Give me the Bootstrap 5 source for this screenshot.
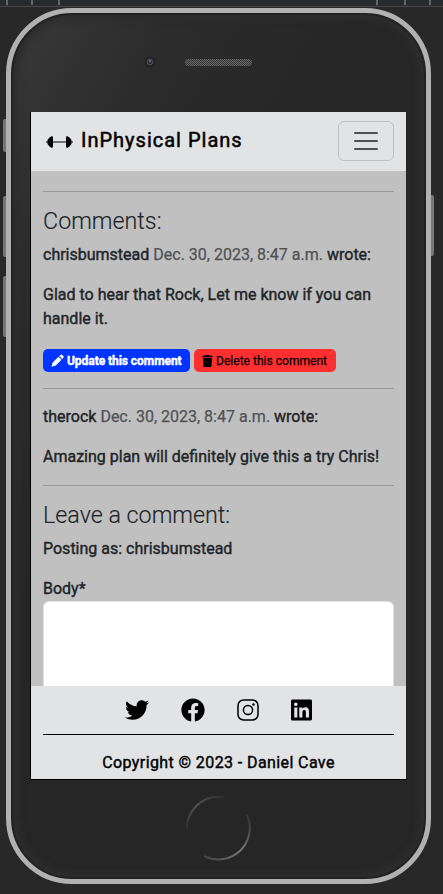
<!DOCTYPE html>
<html lang="en">
<head>
<meta charset="utf-8">
<meta name="viewport" content="width=device-width, initial-scale=1">
<title>InPhysical Plans</title>
<link href="https://cdn.jsdelivr.net/npm/bootstrap@5.3.0/dist/css/bootstrap.min.css" rel="stylesheet">
<style>
body{background:#282828;font-family:Roboto,"Liberation Sans",sans-serif;font-weight:400;height:894px;overflow:hidden}
.ruler{height:7px;background:#282a2d;border-bottom:1px solid #4b4747}
.ruler svg{display:block}
.phone{width:425px;height:876px;margin:1px 0 0 6px;border:5px solid #b1b1b1;border-radius:66px;padding:99px 19px 0 19px;
 background:linear-gradient(120deg,#393939 0,#2c2c2c 18%,#262626 38%,#262626 100%);box-shadow:inset 0 0 0 2px #222,inset 0 0 7px 7px #2d2d2d}
.side-key{width:3px;background:#777;border-radius:2px 0 0 2px;left:3px}
.side-key.right{left:431px;border-radius:0 2px 2px 0}
.camera{left:141px;top:54px}
.speaker{left:185px;top:59px;width:67px;height:7px;border-radius:4px;background:repeating-conic-gradient(#666 0 25%,#363636 0 50%) 0 0/2px 2px}
.home-key{left:185px;top:794px}
.device-screen{width:377px;height:668px;border:solid #000;border-width:0 0 1px 1px;border-right:1px solid transparent;background:#c0c0c0;background-clip:padding-box;color:#212529;-webkit-text-stroke:.4px currentColor}
.top-bar{height:59px;background:#e1e3e5;padding:0 12px 0 15px}
.brand-name{font-size:20px;letter-spacing:1px;color:#000;line-height:30px;margin-top:-4px;margin-left:-1px;-webkit-text-stroke-width:.5px}
.navbar-toggler{width:56px;height:40px;border-color:rgba(0,0,0,.15);margin-top:-2px}
.content-area{height:515px;padding:4px 12px 0}
.section-title{font-size:23.3px;font-weight:300;line-height:27px;height:27px;-webkit-text-stroke-width:.15px}
.stamp{color:#505254;-webkit-text-stroke-width:.25px}
.action-btn{height:23px;font-size:12px;line-height:18px;padding:0 8px;border:0;border-radius:5px;display:flex;align-items:center;gap:3px;white-space:nowrap}
.edit-btn,.edit-btn:hover{background:#0034ff;color:#fff;font-weight:700;letter-spacing:-.05px;width:147px}
.trash-btn,.trash-btn:hover{background:#ff2f2f;color:#000;width:142px;letter-spacing:.03px;-webkit-text-stroke-width:.25px}
.btn-row{padding-top:2px}
.content-area textarea{height:240px;border-color:#dee2e6;border-radius:6px;resize:none;background:#fff}
.page-foot{height:93px;background:#e1e3e5;color:#000}
.page-foot p{letter-spacing:.4px}
.social-row{height:48px;gap:32px}
.foot-rule{border-top:1px solid #000;margin:0 12px}
</style>
<script src="https://cdn.jsdelivr.net/npm/bootstrap@5.3.0/dist/js/bootstrap.bundle.min.js"></script>
</head>
<body class="position-relative">
<div class="ruler"><svg width="443" height="5" fill="#626466"><path d="M6 0h2v5H6zM31 0h2v5h-2zM58 0h2v5h-2zM376 0h2v5h-2zM404 0h2v5h-2zM429 0h2v5h-2z"/></svg></div>
<div class="side-key position-absolute" style="top:119px;height:33px"></div>
<div class="side-key position-absolute" style="top:196px;height:61px"></div>
<div class="side-key position-absolute" style="top:276px;height:61px"></div>
<div class="side-key right position-absolute" style="top:195px;height:61px"></div>
<main class="phone">
 <div class="device-screen d-flex flex-column overflow-hidden">
  <nav class="navbar navbar-light top-bar flex-nowrap flex-shrink-0">
   <a class="d-flex align-items-center text-decoration-none" href="#">
    <svg width="28" height="14" viewBox="0 0 28 14" class="me-2"><path d="M0 6.500h27v1H0zM1.500 5l2-2.500L6 1l1 1v10l-1 1-2.500-1.500L1.500 9zM20 2l1-1 2.500 1.500 2 2.500v4l-2 2.500L21 13l-1-1z"/></svg>
    <span class="brand-name">InPhysical Plans</span>
   </a>
   <button class="navbar-toggler" type="button" aria-label="Toggle navigation"><svg class="d-block mx-auto" width="30" height="30" viewBox="0 0 30 30"><path stroke="#4f5052" stroke-linecap="round" stroke-width="2" d="M4 7h22M4 15h22M4 23h22"/></svg></button>
  </nav>
  <section class="content-area overflow-hidden flex-shrink-0">
   <hr>
   <h4 class="section-title mb-2">Comments:</h4>
   <p class="mb-3">chrisbumstead <span class="stamp">Dec. 30, 2023, 8:47 a.m.</span> wrote:</p>
   <p class="mb-3">Glad to hear that Rock, Let me know if you can handle it.</p>
   <div class="d-flex gap-1 btn-row">
    <a href="#" class="btn action-btn edit-btn"><svg width="13" height="13" viewBox="0 0 13 13" fill="currentColor"><path d="M9.200 1.200Q10.300 0 11.500 1.200l.6.600q1.100 1.100 0 2.300l-.9.900-3-3zM7.500 2.700l3 3-5.700 5.800L.5 12.700l1.200-4.200z"/></svg>Update this comment</a>
    <a href="#" class="btn action-btn trash-btn"><svg width="11" height="12" viewBox="0 0 448 512" fill="currentColor"><path d="M135 18C140 7 152 0 164 0h120c12 0 24 7 29 18l7 14h96c18 0 32 14 32 32s-14 32-32 32H32C14 96 0 82 0 64s14-32 32-32h96zM32 128h384l-21 339c-2 25-23 45-48 45H101c-25 0-46-20-48-45z"/></svg>Delete this comment</a>
   </div>
   <hr>
   <p class="mb-3">therock <span class="stamp">Dec. 30, 2023, 8:47 a.m.</span> wrote:</p>
   <p class="mb-3">Amazing plan will definitely give this a try Chris!</p>
   <hr>
   <h4 class="section-title mb-2">Leave a comment:</h4>
   <p class="mb-3">Posting as: chrisbumstead</p>
   <label for="body-text" class="d-block">Body*</label>
   <textarea id="body-text" class="form-control"></textarea>
  </section>
  <footer class="page-foot flex-shrink-0 text-center">
   <div class="social-row d-flex align-items-center justify-content-center">
    <svg width="24" height="24" viewBox="0 0 512 512"><path d="M459.400 151.700c.3 4.500.3 9.100.3 13.600 0 138.700-105.600 298.600-298.600 298.600-59.500 0-114.700-17.200-161.100-47.100 8.400 1 16.600 1.300 25.300 1.300 49.100 0 94.200-16.600 130.300-44.800-46.100-1-84.800-31.200-98.100-72.800 6.500 1 13 1.600 19.800 1.600 9.400 0 18.800-1.300 27.600-3.600-48.100-9.700-84.100-52-84.100-103v-1.300c14 7.800 30.200 12.700 47.400 13.300-28.300-18.800-46.800-51-46.800-87.400 0-19.500 5.200-37.400 14.300-53 51.700 63.700 129.300 105.300 216.400 109.800-1.600-7.800-2.600-15.900-2.600-24 0-57.800 46.800-104.900 104.900-104.900 30.200 0 57.500 12.700 76.700 33.100 23.700-4.500 46.500-13.300 66.600-25.300-7.800 24.400-24.400 44.800-46.100 57.800 21.100-2.300 41.600-8.100 60.400-16.200-14.300 20.800-32.200 39.300-52.600 54.300z"/></svg>
    <svg width="24" height="24" viewBox="0 0 512 512"><path d="M504 256C504 119 393 8 256 8S8 119 8 256c0 123.800 90.700 226.400 209.300 245V327.700h-63V256h63v-54.600c0-62.200 37-96.500 93.700-96.500 27.100 0 55.500 4.800 55.500 4.800v61h-31.300c-30.800 0-40.400 19.100-40.400 38.700V256h68.800l-11 71.700h-57.800V501C413.300 482.400 504 379.800 504 256z"/></svg>
    <svg width="22" height="24" viewBox="0 0 22 24" fill="none" stroke="#000" stroke-width="1.500"><rect x="1" y="2" width="20" height="20" rx="5.500"/><circle cx="11" cy="12" r="4.600"/><circle cx="16.500" cy="6.500" r="1.200" fill="#000" stroke="none"/></svg>
    <svg width="21" height="24" viewBox="0 0 448 512"><path d="M416 32H31.900C14.300 32 0 46.500 0 64.300v383.400C0 465.500 14.300 480 31.900 480H416c17.600 0 32-14.500 32-32.300V64.300c0-17.800-14.400-32.300-32-32.300zM135.400 416H69V202.200h66.500V416zm-33.200-243c-21.300 0-38.500-17.300-38.500-38.500S80.900 96 102.200 96c21.200 0 38.500 17.300 38.500 38.500 0 21.300-17.200 38.500-38.500 38.500zm282.100 243h-66.400V312c0-24.800-.5-56.700-34.500-56.700-34.600 0-39.900 27-39.900 54.900V416h-66.400V202.200h63.700v29.200h.9c8.900-16.800 30.600-34.500 62.900-34.500 67.200 0 79.700 44.300 79.700 101.900V416z"/></svg>
   </div>
   <div class="foot-rule"></div>
   <p class="mb-0 pt-3">Copyright © 2023 - Daniel Cave</p>
  </footer>
 </div>
</main>
<svg class="camera position-absolute" width="18" height="18"><circle cx="9" cy="8" r="5.500" fill="#202025"/><circle cx="9" cy="8" r="3" fill="#303036" stroke="#505055"/><circle cx="9" cy="7" r="1" fill="#777"/></svg>
<div class="speaker position-absolute"></div>
<svg class="home-key position-absolute" width="68" height="68" fill="none" stroke-width="2" stroke-linecap="round">
 <defs><linearGradient id="g1" x1="0" y1="1" x2="1" y2="0"><stop offset="0" stop-color="#282828"/><stop offset=".5" stop-color="#555"/><stop offset="1" stop-color="#303030"/></linearGradient>
 <linearGradient id="g2" x1="0" y1="1" x2="1" y2="0"><stop offset="0" stop-color="#444"/><stop offset=".5" stop-color="#777"/><stop offset="1" stop-color="#333"/></linearGradient></defs>
 <path stroke="url(#g1)" d="M2 38A32 32 0 0 1 38 3"/><path stroke="url(#g2)" d="M20 62.500A31.500 31.500 0 0 0 62.500 22"/></svg>
</body>
</html>
